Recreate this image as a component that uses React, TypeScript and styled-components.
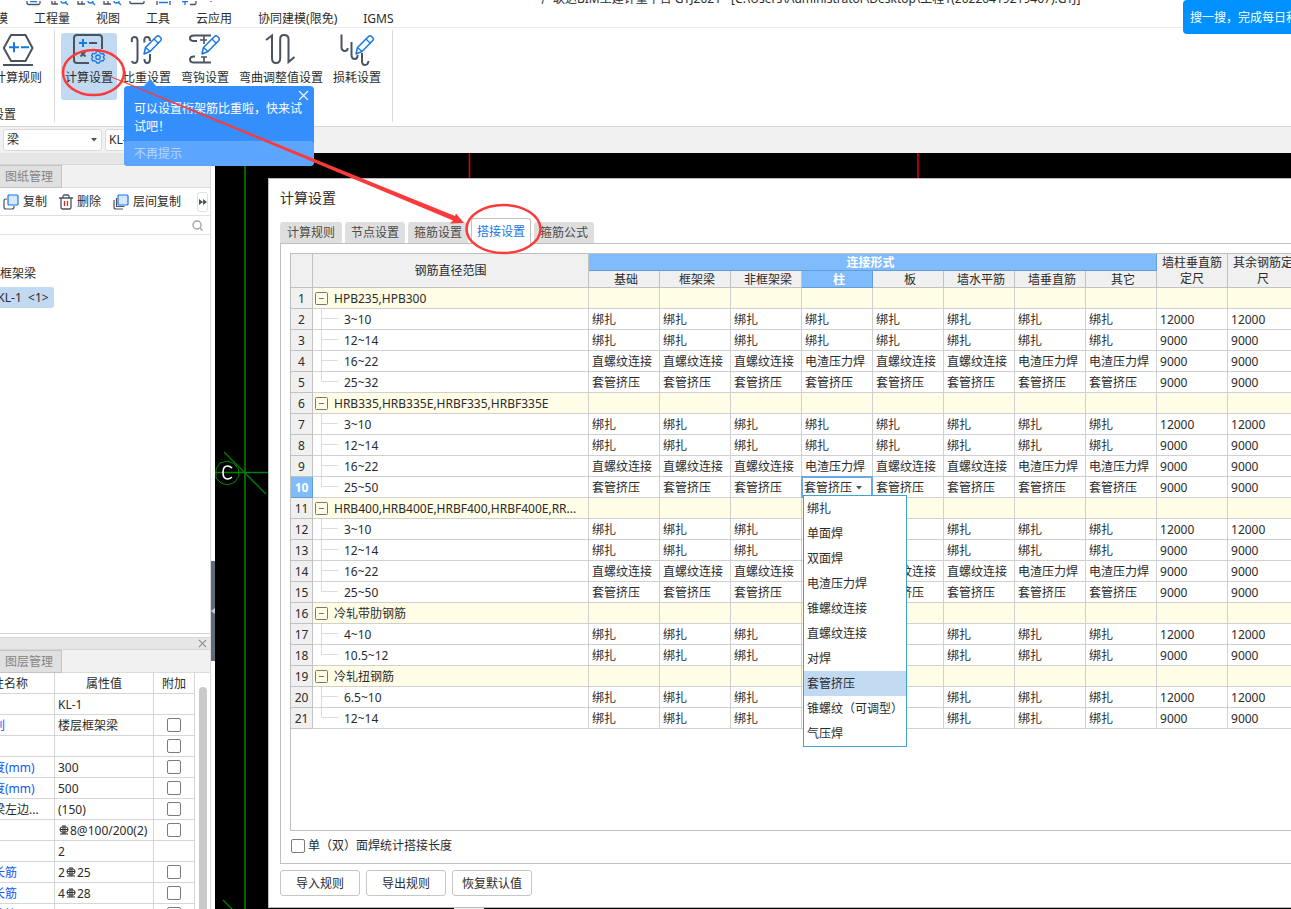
import React from 'react';
import styled, { createGlobalStyle, css } from 'styled-components';

const GlobalStyle = createGlobalStyle`
  * { box-sizing: border-box; }
  body { margin: 0; background: #fff; overflow: hidden; }
  body, button, input, select {
    font-family: 'Noto Sans', 'Noto Sans CJK SC', sans-serif;
    font-size: 12px;
    line-height: 16px;
    color: #2b2b2b;
  }
  button { padding: 0; border: 0; background: none; }
`;

const Page = styled.div`
  position: relative;
  display: flex;
  flex-direction: column;
  height: 100vh;
  overflow: hidden;
`;

/* ---------- title bar and menu ---------- */
const TitleBar = styled.header`
  display: flex;
  align-items: flex-end;
  flex: none;
  height: 11px;
  padding-left: 26px;
  overflow: hidden;
`;
const QuickTools = styled.div`
  flex: none;
  width: 515px;
  height: 11px;
`;
const WindowTitle = styled.div`
  flex: none;
  padding-bottom: 4px;
  white-space: nowrap;
`;
const MenuBar = styled.nav`
  display: flex;
  flex: none;
  gap: 26px;
  height: 17px;
  margin-left: -16px;
  border-bottom: 1px solid #ececec;
`;
const MenuItem = styled.a`
  color: #2b2b2b;
  text-decoration: none;
  white-space: nowrap;
`;
const SearchPromo = styled.button`
  position: absolute;
  top: 0;
  right: 0;
  width: 108px;
  height: 34px;
  padding: 2px 0 0 7px;
  border-radius: 4px 0 0 4px;
  background: #0091ff;
  color: #fff;
  text-align: left;
  white-space: nowrap;
  overflow: hidden;
`;

/* ---------- ribbon ---------- */
const Ribbon = styled.section`
  display: flex;
  flex: none;
  height: 99px;
  padding-top: 2px;
  border-bottom: 1px solid #d6d6d6;
`;
const RibbonGroup = styled.div<{ $clipped?: boolean }>`
  display: flex;
  flex-direction: column;
  justify-content: space-between;
  height: 92px;
  padding: 3px 7px 0 6px;
  border-right: 1px solid #dcdcdc;
  ${p => p.$clipped && css`margin-left: -16px; padding-right: 8px;`}
`;
const RibbonRow = styled.div`
  display: flex;
  gap: 2px;
`;
const RibbonSlot = styled.div`
  position: relative;
`;
const RibbonButton = styled.button<{ $active?: boolean }>`
  display: flex;
  flex-direction: column;
  align-items: center;
  gap: 1px;
  height: 67px;
  padding: 0 4px;
  border-radius: 3px;
  white-space: nowrap;
  background: ${p => (p.$active ? '#c2d9f2' : 'transparent')};
`;
const GroupName = styled.span`
  padding-left: 2px;
  line-height: 14px;
`;
const Tip = styled.div`
  position: absolute;
  z-index: 5;
  top: 53px;
  left: 5px;
  width: 190px;
  border-radius: 4px;
  background: #348ffd;
  color: #fff;
  &::before {
    content: '';
    position: absolute;
    top: -7px;
    left: 20px;
    border: 6px solid transparent;
    border-top: 0;
    border-bottom: 7px solid #348ffd;
  }
`;
const TipText = styled.p`
  margin: 0;
  padding: 14px 10px 5px;
  line-height: 18px;
`;
const TipClose = styled.button`
  position: absolute;
  top: 4px;
  right: 5px;
  width: 11px;
  height: 11px;
  svg { display: block; }
`;
const TipDismiss = styled.button`
  display: block;
  width: 100%;
  height: 25px;
  padding-left: 10px;
  border-radius: 4px;
  background: #5da6ff;
  color: #b9d8ff;
  text-align: left;
`;

/* ---------- filter bar ---------- */
const FilterBar = styled.section`
  display: flex;
  flex: none;
  gap: 3px;
  height: 26px;
  padding: 2px 3px;
  background: #f1f1f1;
`;
const FilterField = styled.div`
  position: relative;
  width: 99px;
  height: 22px;
  svg { position: absolute; right: 5px; top: 9px; pointer-events: none; }
`;
const FilterSelect = styled.select`
  appearance: none;
  width: 100%;
  height: 100%;
  padding: 0 3px;
  border: 1px solid #dadada;
  border-radius: 3px;
  background: #fff;
`;

/* ---------- workspace ---------- */
const Workspace = styled.main`
  display: flex;
  flex: 1;
  min-height: 0;
`;
const Sidebar = styled.aside`
  display: flex;
  flex-direction: column;
  flex: none;
  width: 211px;
  border-right: 1px solid #d9d9d9;
  overflow: hidden;
`;
const Splitter = styled.div`
  display: flex;
  flex: none;
  align-items: flex-start;
  width: 4px;
  padding-top: 408px;
`;
const SplitterHandle = styled.button`
  width: 4px;
  height: 100px;
  background: #5f6b79;
  svg { display: block; }
`;
const PanelStrip = styled.div`
  display: flex;
  flex: none;
  align-items: center;
  justify-content: flex-end;
  height: 12px;
  padding-right: 3px;
  background: #e6e6e6;
  border-bottom: 1px solid #d6d6d6;
`;
const StripClose = styled.button`
  width: 9px;
  height: 9px;
  svg { display: block; }
`;
const PanelTabs = styled.div`
  flex: none;
  height: 23px;
  background: #f1f1f1;
  border-bottom: 1px solid #dcdcdc;
`;
const PanelTab = styled.button`
  width: 62px;
  height: 23px;
  padding-left: 5px;
  border: 1px solid #c4c4c4;
  border-left: 0;
  background: #e0e0e0;
  color: #858585;
  text-align: left;
`;
const ToolRow = styled.div`
  display: flex;
  flex: none;
  align-items: center;
  gap: 12px;
  height: 28px;
  padding: 0 2px 0 3px;
  border-bottom: 1px solid #e0e0e0;
`;
const ToolButton = styled.button`
  display: flex;
  align-items: center;
  gap: 4px;
  padding-top: 1px;
  white-space: nowrap;
`;
const MoreButton = styled.button`
  display: flex;
  align-items: center;
  justify-content: center;
  width: 11px;
  height: 20px;
  margin-left: auto;
  border: 1px solid #e2e2e2;
  border-radius: 3px;
`;
const SearchRow = styled.label`
  display: flex;
  flex: none;
  align-items: center;
  height: 19px;
  padding-right: 7px;
  border-bottom: 1px solid #e0e0e0;
`;
const SearchInput = styled.input`
  flex: 1;
  min-width: 0;
  height: 16px;
  border: 0;
  outline: 0;
`;
const Tree = styled.div`
  flex: none;
  height: 399px;
  padding-top: 28px;
  border-bottom: 1px solid #d6d6d6;
`;
const TreeNode = styled.div`
  height: 21px;
  line-height: 21px;
`;
const TreeLeaf = styled.button`
  display: block;
  width: 62px;
  height: 21px;
  margin: 3px 0 0 -8px;
  border-radius: 3px;
  background: #c2d9f2;
  white-space: pre;
`;
const PropertyPanel = styled.section`
  display: flex;
  flex-direction: column;
  flex: 1;
  min-height: 0;
  margin-top: 3px;
  border-top: 1px solid #d6d6d6;
`;
const PropertyBody = styled.div`
  display: flex;
  flex: 1;
  min-height: 0;
  overflow: hidden;
`;
const PropertyTable = styled.table`
  flex: none;
  width: 241px;
  height: max-content;
  margin-left: -46px;
  table-layout: fixed;
  border-collapse: separate;
  border-spacing: 0;
`;
const PropHead = styled.th`
  height: 21px;
  padding: 2px 0 0;
  border-right: 1px solid #d6d6d6;
  border-bottom: 1px solid #d6d6d6;
  font-weight: 400;
`;
const PropCell = styled.td<{ $link?: boolean; $center?: boolean }>`
  height: 21px;
  padding: ${p => (p.$center ? '0' : '2px 0 0 3px')};
  border-right: 1px solid #d6d6d6;
  border-bottom: 1px solid #d6d6d6;
  color: ${p => (p.$link ? '#0c5bf2' : '#2b2b2b')};
  line-height: 16px;
  white-space: nowrap;
  input { display: block; margin: 0 auto; }
`;
const Scrollbar = styled.div`
  width: 8px;
  margin: 14px 0 0 4px;
  border-radius: 4px 4px 0 0;
  background: #c9c9c9;
`;
const Check = styled.input.attrs({ type: 'checkbox' })`
  appearance: none;
  flex: none;
  width: 14px;
  height: 14px;
  margin: 0;
  border: 1px solid #7b7b7b;
  border-radius: 2px;
  background: #fff;
`;
const RebarSign = styled.svg`
  margin: 0 1px;
  vertical-align: 0;
`;

/* ---------- drawing canvas and dialog ---------- */
const Canvas = styled.section`
  position: relative;
  display: flex;
  flex: 1;
  min-width: 0;
  padding: 25px 0 1px 53px;
  background: #000;
  overflow: hidden;
`;
const Drawing = styled.svg`
  position: absolute;
  inset: 0;
  width: 100%;
  height: 100%;
`;
const Dialog = styled.div`
  position: relative;
  display: flex;
  flex: 1;
  flex-direction: column;
  min-width: 0;
  margin-right: -60px;
  padding: 9px 11px 11px;
  border: 1px solid #bdbdbd;
  background: #fff;
`;
const DialogTitle = styled.h1`
  margin: 0;
  font-size: 14px;
  font-weight: 400;
  line-height: 20px;
`;
const Tabs = styled.div`
  display: flex;
  align-items: flex-end;
  gap: 3px;
  height: 26px;
  margin: 10px 0 -1px;
`;
const Tab = styled.button<{ $active?: boolean }>`
  position: relative;
  width: 60px;
  height: 21px;
  margin-bottom: 1px;
  border-radius: 3px 3px 0 0;
  background: #dedede;
  color: #4a4a4a;
  white-space: nowrap;
  &:first-child { width: 62px; }
  ${p => p.$active && css`
    height: 26px;
    margin-bottom: 0;
    border: 1px solid #bfbfc4;
    border-bottom: 0;
    background: #fff;
    color: #1777e6;
  `}
`;
const TabPanel = styled.div`
  display: flex;
  flex: 1;
  flex-direction: column;
  min-height: 0;
  padding: 9px 9px 0;
  border: 1px solid #bfbfc4;
`;
const GridBox = styled.div`
  flex: 1;
  min-height: 0;
  border: 1px solid #bfbfbf;
`;
const Grid = styled.table`
  width: 1008px;
  table-layout: fixed;
  border-collapse: separate;
  border-spacing: 0;
`;
const Head = styled.th<{ $hot?: boolean }>`
  height: 17px;
  padding: 0 2px;
  border-right: 1px solid ${p => (p.$hot ? '#5f9fe0' : '#c2c2c2')};
  border-bottom: 1px solid ${p => (p.$hot ? '#5f9fe0' : '#c2c2c2')};
  background: ${p => (p.$hot ? '#80bbfb' : '#f0f0f0')};
  color: ${p => (p.$hot ? '#fff' : '#2b2b2b')};
  font-weight: ${p => (p.$hot ? 700 : 400)};
  line-height: 16px;
`;
const BandHead = styled(Head)`
  padding: 2px 4px 0 0;
  line-height: 14px;
`;
const SubHead = styled(Head)`
  padding: 2px 0 0 4px;
  line-height: 14px;
`;
const RowNumber = styled(Head)`
  height: 21px;
  padding: 2px 0 0;
`;
const Cell = styled.td<{ $group?: boolean }>`
  position: relative;
  height: 21px;
  padding: 2px 0 0 3px;
  border-right: 1px solid #d0d0d0;
  border-bottom: 1px solid #d0d0d0;
  background: ${p => (p.$group ? '#fffde6' : '#fff')};
  line-height: 16px;
  white-space: nowrap;
`;
const FlushCell = styled(Cell)`
  padding: 0 0 0 3px;
`;
const RangeLabel = styled.div<{ $group?: boolean }>`
  display: flex;
  align-items: center;
  gap: ${p => (p.$group ? 6 : 4)}px;
  height: 20px;
  margin-left: ${p => (p.$group ? -1 : 5)}px;
  svg { flex: none; }
`;
const RangeText = styled.span`
  padding-top: 2px;
`;
const Toggle = styled.button`
  flex: none;
  width: 13px;
  height: 13px;
  svg { display: block; }
`;
const CellSelect = styled.select`
  display: block;
  appearance: none;
  width: 70px;
  height: 20px;
  margin-left: -3px;
  padding: 2px 2px 0;
  border: 0;
  outline: 2px solid #6ba8ea;
  outline-offset: -1px;
  background: #fff;
`;
const CellCaret = styled.svg`
  position: absolute;
  top: 9px;
  right: 10px;
  pointer-events: none;
`;
const Options = styled.ul`
  position: absolute;
  z-index: 3;
  top: 18px;
  left: 1px;
  width: 104px;
  margin: 0;
  padding: 0;
  border: 1px solid #3ea3cf;
  background: #fff;
  list-style: none;
`;
const Option = styled.li<{ $chosen?: boolean }>`
  height: 25px;
  padding-left: 3px;
  line-height: 25px;
  background: ${p => (p.$chosen ? '#c2d9f2' : '#fff')};
`;
const CheckRow = styled.label`
  display: flex;
  align-items: center;
  gap: 3px;
  height: 32px;
  padding: 0 0 3px 1px;
`;
const DialogButtons = styled.div`
  display: flex;
  gap: 6px;
  padding-top: 6px;
`;
const DialogButton = styled.button`
  width: 80px;
  height: 26px;
  padding-top: 2px;
  border: 1px solid #c6c6c6;
  border-radius: 3px;
  background: #fff;
`;
const Markup = styled.svg`
  position: absolute;
  z-index: 10;
  top: 0;
  left: 0;
  width: 560px;
  height: 270px;
  pointer-events: none;
`;

/* ---------- icons ---------- */
const INK = '#4b5262';
const BLUE = '#1777e6';

const RibbonIcon = ({ children }: { children: React.ReactNode }) => (
  <svg width="36" height="36" viewBox="0 0 36 36" fill="none" stroke={INK} strokeWidth="2">
    {children}
  </svg>
);
const Pencil = ({ x = 0 }: { x?: number }) => (
  <g transform={`translate(${x} 0)`} stroke={BLUE} strokeWidth="1.5" strokeLinejoin="round">
    <path d="M15 21 16.5 14.5 27.5 3.5Q29 2 30.5 3.5L31.8 4.8Q33 6 31.8 7.5L21 18.5Z" fill="#fff" />
    <path d="M25 6 29.5 10.5M16.5 14.5 21 18.5" strokeWidth="1.3" />
  </g>
);
const RuleIcon = () => (
  <RibbonIcon>
    <path d="M11 2H25.5L32.5 15 25.5 28H11L3.8 15Z" strokeLinejoin="round" />
    <path d="M3 32H33" />
    <path d="M9 14.2H19M14 9.2V19.2M21 14.2H29" stroke={BLUE} />
  </RibbonIcon>
);
const CalcIcon = () => (
  <RibbonIcon>
    <path d="M31 16V5Q31 2 28 2H6Q3 2 3 5V27Q3 30 6 30H18" />
    <path d="M8 10H16M12 6V14" stroke={BLUE} />
    <path d="M18 10H26" />
    <path d="M9.5 18.5 14.5 23.5M14.5 18.5 9.5 23.5" strokeWidth="1.8" />
    <g stroke={BLUE} strokeWidth="1.3" strokeLinejoin="round">
      <path d="M25.6 18.2H28.4L29 20 30.8 20.9 32.4 20.5 33.4 22.6 32.2 24 33.4 25.8 32.2 28 30.3 27.6 28.9 28.5 28.3 30H25.7L25 28.5 23.5 27.6 21.7 28 20.6 25.8 21.8 24 20.6 22.5 21.8 20.4 23.5 20.8 25 20Z" />
      <circle cx="27" cy="24.2" r="2.2" />
    </g>
  </RibbonIcon>
);
const WeightIcon = () => (
  <RibbonIcon>
    <path d="M3 9Q2 4 5.5 4 8.5 4 8.5 8V26Q8.5 30 5.5 30 3.5 30 3 28" />
    <path d="M15.500 9.500Q14.500 4 18 4 21 4 21 8M21 21V26Q21 30 18 30 15.500 30 15.500 26" />
    <Pencil />
  </RibbonIcon>
);
const HookIcon = () => (
  <RibbonIcon>
    <path d="M24 2.500H7Q3 2.500 3 5.200 3 8 7 8H10" />
    <path d="M24 29.500H7Q3 29.500 3 26.500 3 23.500 7 23.500H8" />
    <path d="M17 3V11M13 7H20M17 24V29M14 24H20" strokeWidth="1.6" />
    <Pencil />
  </RibbonIcon>
);
const BendIcon = () => (
  <RibbonIcon>
    <path d="M3 7 9 2.500V25Q9 30 13 30 17.200 30 17.200 25V6Q17.200 2 21 2 25.500 2 25.500 6V29L31.500 24" />
  </RibbonIcon>
);
const LossIcon = () => (
  <RibbonIcon>
    <path d="M2.500 1.500V14Q2.500 18 6 18 8.500 18 8.700 15" />
    <path d="M12.500 9V22Q12.500 26 16 26 18.500 26 18.700 22" />
    <path d="M23 20V28Q23 32 26 32 29 32 29.500 28" />
    <Pencil x={2} />
  </RibbonIcon>
);
const Caret = () => (
  <svg width="6" height="4" viewBox="0 0 6 4"><path d="M0 0H6L3 3.500Z" fill={INK} /></svg>
);
const Cross = ({ size, color }: { size: number; color: string }) => (
  <svg width={size} height={size} viewBox="0 0 10 10" stroke={color} strokeWidth="1.2">
    <path d="M1 1 9 9M9 1 1 9" />
  </svg>
);
const CopyIcon = ({ layers }: { layers?: boolean }) => (
  <svg width="16" height="16" viewBox="0 0 16 16" fill="none" stroke={INK} strokeWidth="1.2">
    {layers && <path d="M3.500 4V12.500H11.500" />}
    <path d={layers ? 'M1 6V13Q1 15 3 15H10' : 'M4 5H3Q1 5 1 7V13Q1 15 3 15H9Q11 15 11 13V12'} />
    <rect x="5" y="1" width="10" height="10" rx="1" fill="#d6e8fd" stroke={BLUE} />
  </svg>
);
const TrashIcon = () => (
  <svg width="14" height="16" viewBox="0 0 14 16" fill="none" stroke={INK} strokeWidth="1.3">
    <path d="M0 4H14M4 4V2.500Q4 1 5.500 1H8.500Q10 1 10 2.500V4M2 4V13Q2 15 4 15H10Q12 15 12 13V4" />
    <path d="M5.500 7V12M8.500 7V12" stroke="#e02828" />
  </svg>
);
const Rebar = () => (
  <RebarSign width="10" height="10" viewBox="0 0 10 10" fill="none" stroke="#2b2b2b" strokeWidth="1">
    <path d="M1 9H9M4 0V9M6 0V9M1 4.500H9" />
    <path d="M3 2H7Q9 2 9 4.500 9 7 7 7H3Q1 7 1 4.500 1 2 3 2Z" />
  </RebarSign>
);

/* ---------- data ---------- */
const MENUS = ['建模', '工程量', '视图', '工具', '云应用', '协同建模(限免)', 'IGMS'];
const TABS = ['计算规则', '节点设置', '箍筋设置', '搭接设置', '箍筋公式'];
const FORMS = ['基础', '框架梁', '非框架梁', '柱', '板', '墙水平筋', '墙垂直筋', '其它'];
const OPTIONS = ['绑扎', '单面焊', '双面焊', '电渣压力焊', '锥螺纹连接', '直螺纹连接', '对焊', '套管挤压', '锥螺纹（可调型）', '气压焊'];

const TIE = Array(8).fill('绑扎') as string[];
const SLEEVE = Array(8).fill('套管挤压') as string[];
const Z = '直螺纹连接';
const D = '电渣压力焊';
const THREAD = [Z, Z, Z, D, Z, Z, D, D];

type Row = { label: string; forms?: string[]; len?: string; last?: boolean };
const ROWS: Row[] = [
  { label: 'HPB235,HPB300' },
  { label: '3~10', forms: TIE, len: '12000' },
  { label: '12~14', forms: TIE, len: '9000' },
  { label: '16~22', forms: THREAD, len: '9000' },
  { label: '25~32', forms: SLEEVE, len: '9000', last: true },
  { label: 'HRB335,HRB335E,HRBF335,HRBF335E' },
  { label: '3~10', forms: TIE, len: '12000' },
  { label: '12~14', forms: TIE, len: '9000' },
  { label: '16~22', forms: THREAD, len: '9000' },
  { label: '25~50', forms: SLEEVE, len: '9000', last: true },
  { label: 'HRB400,HRB400E,HRBF400,HRBF400E,RR...' },
  { label: '3~10', forms: TIE, len: '12000' },
  { label: '12~14', forms: TIE, len: '9000' },
  { label: '16~22', forms: THREAD, len: '9000' },
  { label: '25~50', forms: SLEEVE, len: '9000', last: true },
  { label: '冷轧带肋钢筋' },
  { label: '4~10', forms: TIE, len: '12000' },
  { label: '10.5~12', forms: TIE, len: '9000', last: true },
  { label: '冷轧扭钢筋' },
  { label: '6.5~10', forms: TIE, len: '12000' },
  { label: '12~14', forms: TIE, len: '9000', last: true },
];
const ACTIVE_ROW = 9;
const ACTIVE_COL = 3;

type Prop = { name: string; value: React.ReactNode; link?: boolean; check?: boolean };
const PROPS: Prop[] = [
  { name: '', value: 'KL-1' },
  { name: '结构类别', value: '楼层框架梁', link: true, check: true },
  { name: '', value: '', check: true },
  { name: '截面宽度(mm)', value: '300', link: true, check: true },
  { name: '截面高度(mm)', value: '500', link: true, check: true },
  { name: '轴线距梁左边...', value: '(150)', check: true },
  { name: '', value: <><Rebar />8@100/200(2)</>, check: true },
  { name: '', value: '2' },
  { name: '上部通长筋', value: <>2<Rebar />25</>, link: true, check: true },
  { name: '下部通长筋', value: <>4<Rebar />28</>, link: true, check: true },
  { name: '侧面构造筋', value: '', link: true, check: true },
];

const LapGrid = () => (
  <Grid>
    <colgroup>
      <col style={{ width: 22 }} />
      <col style={{ width: 276 }} />
      {Array.from({ length: 10 }, (_, i) => <col key={i} style={{ width: 71 }} />)}
    </colgroup>
    <thead>
      <tr>
        <Head rowSpan={2} aria-label="行号" />
        <Head rowSpan={2}>钢筋直径范围</Head>
        <BandHead colSpan={8} $hot>连接形式</BandHead>
        <Head rowSpan={2}>墙柱垂直筋定尺</Head>
        <Head rowSpan={2}>其余钢筋定尺</Head>
      </tr>
      <tr>
        {FORMS.map((f, i) => <SubHead key={f} $hot={i === ACTIVE_COL}>{f}</SubHead>)}
      </tr>
    </thead>
    <tbody>
      {ROWS.map((row, r) => {
        const group = !row.forms;
        return (
          <tr key={r}>
            <RowNumber scope="row" $hot={r === ACTIVE_ROW}>{r + 1}</RowNumber>
            <FlushCell $group={group}>
              <RangeLabel $group={group}>
                {group ? (
                  <Toggle aria-label="折叠">
                    <svg width="13" height="13" viewBox="0 0 13 13" fill="none" stroke="#777">
                      <rect x="0.5" y="0.5" width="12" height="12" rx="1" />
                      <path d="M4 6.500H9" />
                    </svg>
                  </Toggle>
                ) : (
                  <svg width="19" height="20" viewBox="0 0 19 20" fill="none" stroke="#dcdcdc">
                    <path d={row.last ? 'M0.500 0V9.500H17' : 'M0.500 0V20M0 9.500H17'} />
                  </svg>
                )}
                <RangeText>{row.label}</RangeText>
              </RangeLabel>
            </FlushCell>
            {FORMS.map((f, c) => (r === ACTIVE_ROW && c === ACTIVE_COL ? (
              <FlushCell key={f}>
                <CellSelect aria-label="柱连接形式" defaultValue="套管挤压">
                  {OPTIONS.map(o => <option key={o}>{o}</option>)}
                </CellSelect>
                <CellCaret width="6" height="4" viewBox="0 0 6 4"><path d="M0 0H6L3 3.500Z" fill={INK} /></CellCaret>
                <Options role="listbox">
                  {OPTIONS.map(o => (
                    <Option key={o} role="option" aria-selected={o === '套管挤压'} $chosen={o === '套管挤压'}>{o}</Option>
                  ))}
                </Options>
              </FlushCell>
            ) : (
              <Cell key={f} $group={group}>{row.forms?.[c]}</Cell>
            )))}
            <Cell $group={group}>{row.len}</Cell>
            <Cell $group={group}>{row.len}</Cell>
          </tr>
        );
      })}
    </tbody>
  </Grid>
);

const App = () => (
  <Page>
    <GlobalStyle />
    <TitleBar>
      <QuickTools>
        <svg width="190" height="11" viewBox="26 0 190 11" fill="none" stroke={INK} strokeWidth="1.3">
          <path d="M27 0V2Q27 3.500 28.500 3.500H38.500Q40 3.500 40 2V0M52 0V3H58M55 0V3M78 0V3H85M82 0V3M104 0V3H111M108 0V3M130 0V2Q130 2.500 131 2.500H143Q144 2.500 144 1.500V0M157 0V4M170 0V4M190 3.500H195Q196 3.500 196 2V0M211 0V1" />
          <path d="M30 0.500H37M159 1.500H168M182 0.500H188M185 0V4" stroke={BLUE} />
          <path d="M61 0Q61 2 63.500 2 66 2 66 0M65.500 1.500 68 4M88 0Q88 2 90.500 2 93 2 93 0M92.500 1.500 95 4M114 0Q114 2 116.500 2 119 2 119 0M118.500 1.500 121 4" stroke={BLUE} />
        </svg>
      </QuickTools>
      <WindowTitle>广联达BIM土建计量平台 GTJ2021 - [C:\Users\Administrator\Desktop\工程1(20220419219467).GTJ]</WindowTitle>
    </TitleBar>
    <MenuBar>
      {MENUS.map(m => <MenuItem key={m} href="#">{m}</MenuItem>)}
    </MenuBar>
    <SearchPromo>搜一搜，完成每日积分</SearchPromo>

    <Ribbon>
      <RibbonGroup $clipped>
        <RibbonRow>
          <RibbonButton><RuleIcon />计算规则</RibbonButton>
        </RibbonRow>
        <GroupName>设置</GroupName>
      </RibbonGroup>
      <RibbonGroup>
        <RibbonRow>
          <RibbonButton $active><CalcIcon />计算设置</RibbonButton>
          <RibbonSlot>
            <RibbonButton><WeightIcon />比重设置</RibbonButton>
            <Tip role="tooltip">
              <TipText>可以设置桁架筋比重啦，快来试试吧！</TipText>
              <TipClose aria-label="关闭"><Cross size={11} color="#fff" /></TipClose>
              <TipDismiss>不再提示</TipDismiss>
            </Tip>
          </RibbonSlot>
          <RibbonButton><HookIcon />弯钩设置</RibbonButton>
          <RibbonButton><BendIcon />弯曲调整值设置</RibbonButton>
          <RibbonButton><LossIcon />损耗设置</RibbonButton>
        </RibbonRow>
      </RibbonGroup>
    </Ribbon>

    <FilterBar>
      <FilterField>
        <FilterSelect aria-label="构件类型"><option>梁</option></FilterSelect>
        <Caret />
      </FilterField>
      <FilterField>
        <FilterSelect aria-label="构件"><option>KL-1</option></FilterSelect>
        <Caret />
      </FilterField>
    </FilterBar>

    <Workspace>
      <Sidebar>
        <PanelStrip />
        <PanelTabs><PanelTab>图纸管理</PanelTab></PanelTabs>
        <ToolRow>
          <ToolButton><CopyIcon />复制</ToolButton>
          <ToolButton><TrashIcon />删除</ToolButton>
          <ToolButton><CopyIcon layers />层间复制</ToolButton>
          <MoreButton aria-label="更多">
            <svg width="8" height="6" viewBox="0 0 8 6" fill={INK}><path d="M0 0 4 3 0 6ZM4 0 8 3 4 6Z" /></svg>
          </MoreButton>
        </ToolRow>
        <SearchRow>
          <SearchInput type="text" aria-label="搜索构件" />
          <svg width="11" height="11" viewBox="0 0 11 11" fill="none" stroke="#a3a3a3" strokeWidth="1.4">
            <circle cx="5" cy="5" r="4" /><path d="M8 8 10.500 10.500" />
          </svg>
        </SearchRow>
        <Tree>
          <TreeNode>框架梁</TreeNode>
          <TreeLeaf>{'KL-1  <1>'}</TreeLeaf>
        </Tree>
        <PropertyPanel>
          <PanelStrip>
            <StripClose aria-label="关闭"><Cross size={9} color="#8a8a8a" /></StripClose>
          </PanelStrip>
          <PanelTabs><PanelTab>图层管理</PanelTab></PanelTabs>
          <PropertyBody>
            <PropertyTable>
              <colgroup>
                <col style={{ width: 101 }} />
                <col style={{ width: 99 }} />
                <col style={{ width: 41 }} />
              </colgroup>
              <thead>
                <tr><PropHead>属性名称</PropHead><PropHead>属性值</PropHead><PropHead>附加</PropHead></tr>
              </thead>
              <tbody>
                {PROPS.map((p, i) => (
                  <tr key={i}>
                    <PropCell $link={p.link}>{p.name}</PropCell>
                    <PropCell>{p.value}</PropCell>
                    <PropCell $center>{p.check && <Check aria-label="附加" />}</PropCell>
                  </tr>
                ))}
              </tbody>
            </PropertyTable>
            <Scrollbar />
          </PropertyBody>
        </PropertyPanel>
      </Sidebar>
      <Splitter>
        <SplitterHandle aria-label="收起侧栏">
          <svg width="4" height="6" viewBox="0 0 4 6"><path d="M4 0V6L0 3Z" fill="#c9ced4" /></svg>
        </SplitterHandle>
      </Splitter>

      <Canvas>
        <Drawing fill="none">
          <path d="M30 0V760" stroke="#006400" strokeWidth="2" />
          <path d="M254.500 0V760M703 0V25" stroke="#e0000f" strokeWidth="1.500" />
          <path d="M0 319.500H53M9 299 51 341M8 747 20 759" stroke="#008000" strokeWidth="1.300" />
          <path d="M239 755H269" stroke="#eee" strokeWidth="2" />
          <path d="M12 308 19 310.500 23.500 316 24 323 20 329 13 332 6 330 1 325 1 316 5 310Z" stroke="#008a00" />
          <path d="M17 315Q15 313 12.500 313 8 313 8 319.500 8 326 12.500 326 15 326 17 324" stroke="#fff" strokeWidth="1.600" />
        </Drawing>
        <Dialog role="dialog" aria-label="计算设置">
          <DialogTitle>计算设置</DialogTitle>
          <Tabs role="tablist">
            {TABS.map(t => (
              <Tab key={t} role="tab" aria-selected={t === '搭接设置'} $active={t === '搭接设置'}>{t}</Tab>
            ))}
          </Tabs>
          <TabPanel>
            <GridBox><LapGrid /></GridBox>
            <CheckRow><Check />单（双）面焊统计搭接长度</CheckRow>
          </TabPanel>
          <DialogButtons>
            <DialogButton>导入规则</DialogButton>
            <DialogButton>导出规则</DialogButton>
            <DialogButton>恢复默认值</DialogButton>
          </DialogButtons>
        </Dialog>
      </Canvas>
    </Workspace>

    <Markup viewBox="0 0 560 270" fill="none" stroke="#fb3b3b" strokeWidth="2.500">
      <ellipse cx="93.500" cy="72.500" rx="30.500" ry="22.500" />
      <ellipse cx="503.500" cy="229" rx="37" ry="24" />
      <path d="M109 75.500 455 216 456 213.500 464 223 450 223.500 453 220.500 109 76.500Z" fill="#fb3b3b" stroke="none" />
    </Markup>
  </Page>
);

export default App;
